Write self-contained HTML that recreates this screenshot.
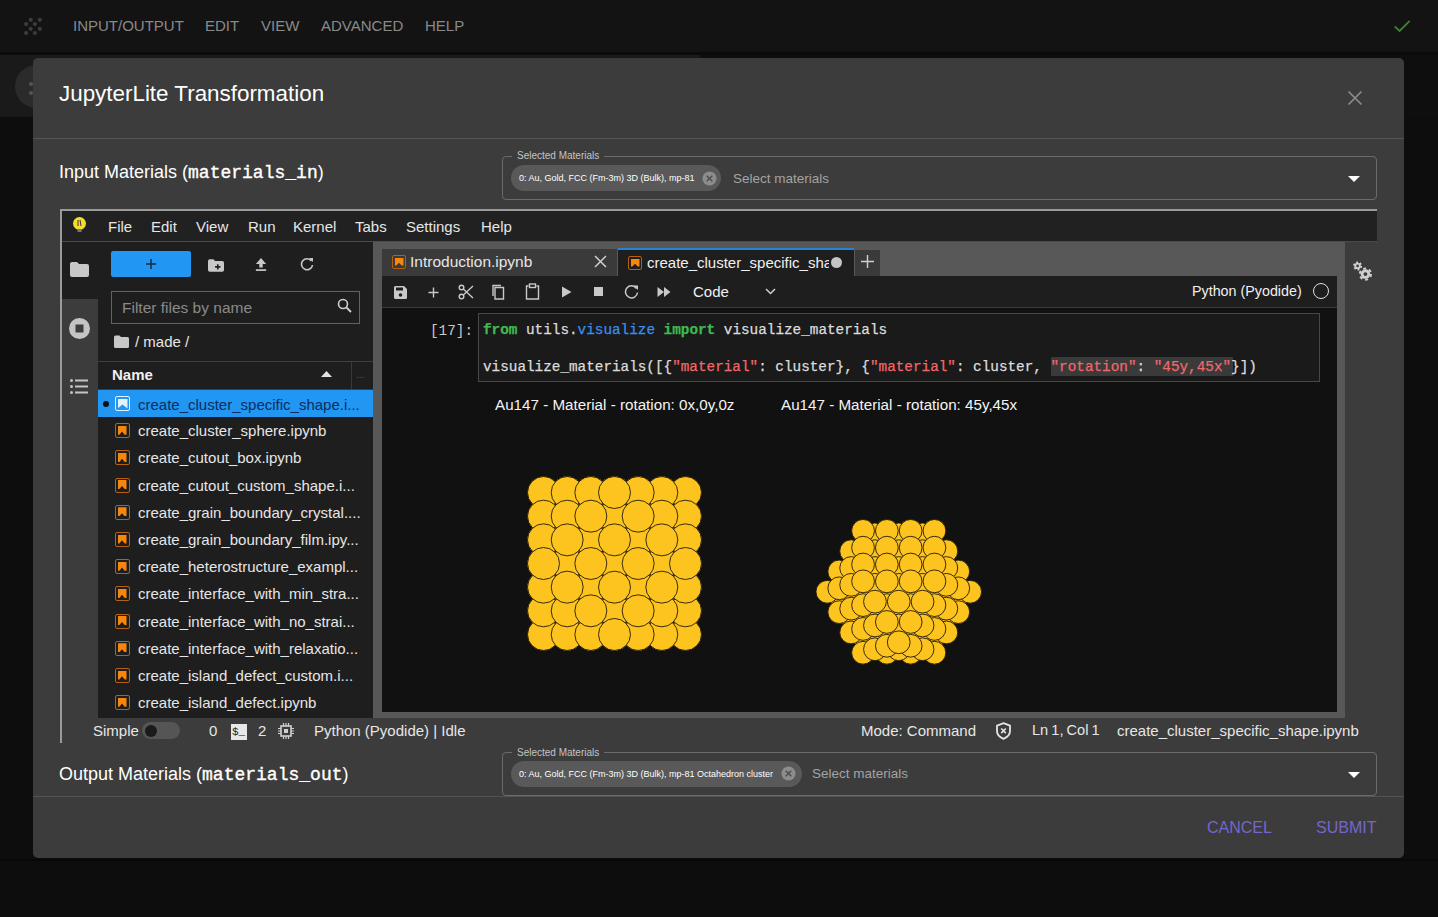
<!DOCTYPE html>
<html><head><meta charset="utf-8">
<style>
*{box-sizing:border-box;margin:0;padding:0}
html,body{width:1438px;height:917px;overflow:hidden;background:#0d0d0d;font-family:"Liberation Sans",sans-serif;color:#e8e8e8}
.a{position:absolute}
.mono{font-family:"Liberation Mono",monospace}
.t{position:absolute;white-space:pre;line-height:1}
.m{position:absolute;top:18px;font-size:15px;color:#8a8a8a;white-space:pre;line-height:1}
.jm{position:absolute;top:219px;font-size:15px;color:#e6e6e6;white-space:pre;line-height:1}
.row{position:absolute;left:98px;width:275px;height:27.2px}
.row .ic{position:absolute;left:17px;top:6px;width:15px;height:15px;border:1.5px solid #b8600f;border-radius:2px}
.row .ic:after{content:"";position:absolute;left:1.5px;top:1.5px;width:9px;height:9px;background:#f7860f;clip-path:polygon(0 0,100% 0,100% 100%,80% 100%,50% 65%,20% 100%,0 100%)}
.row .tx{position:absolute;left:40px;top:6px;font-size:15px;color:#e6e6e6;white-space:pre;line-height:1}
.code{position:absolute;left:483px;font-family:"Liberation Mono",monospace;font-size:14.33px;color:#dcdcdc;white-space:pre;line-height:1;-webkit-text-stroke:0.25px currentColor}
.kw{color:#3fb950;font-weight:700}.mod{color:#3b8eea}.str{color:#f0686a}
.sb{position:absolute;top:723px;font-size:15px;color:#e6e6e6;white-space:pre;line-height:1}
</style></head><body>
<!-- app top bar -->
<div class="a" style="left:0;top:0;width:1438px;height:52px;background:#131313"></div>
<div class="a" style="left:0;top:52px;width:1438px;height:3px;background:#0b0b0b"></div>
<div class="a" style="left:0;top:55px;width:1438px;height:62px;background:#0e0e0e"></div><div class="a" style="left:0;top:55px;width:700px;height:62px;background:#1a1a1a"></div>
<div class="a" style="left:0;top:117px;width:1438px;height:800px;background:#0d0d0d"></div>
<div class="a" style="left:15px;top:64.5px;width:43px;height:43px;border-radius:50%;background:#2b2b2b"></div>
<div class="a" style="left:29px;top:81.5px;width:4px;height:4px;border-radius:50%;background:#555"></div>
<div class="a" style="left:29px;top:90.5px;width:4px;height:4px;border-radius:50%;background:#555"></div>
<svg class="a" style="left:0;top:0" width="50" height="50" viewBox="0 0 50 50" fill="#3c3c3c">
 <circle cx="30.7" cy="19.8" r="2.1"/><circle cx="39.8" cy="19.8" r="2.1"/><circle cx="26.1" cy="24.1" r="2.1"/><circle cx="34.9" cy="24.1" r="2.1"/>
 <circle cx="30.7" cy="28.8" r="2.1"/><circle cx="39.8" cy="28.8" r="2.1"/><circle cx="26.1" cy="33" r="2.1"/><circle cx="34.9" cy="33" r="2.1"/>
</svg>
<div class="m" style="left:73px">INPUT/OUTPUT</div>
<div class="m" style="left:205px">EDIT</div>
<div class="m" style="left:261px">VIEW</div>
<div class="m" style="left:321px">ADVANCED</div>
<div class="m" style="left:425px">HELP</div>
<svg class="a" style="left:1393px;top:17px" width="18" height="16" viewBox="0 0 18 16"><path d="M1.7 9.3 L6.6 13.9 L16.7 3.8" fill="none" stroke="#3e8530" stroke-width="1.8"/></svg>

<div class="a" style="left:0;top:859px;width:1438px;height:2px;background:#080808"></div>
<!-- dialog -->
<div class="a" style="left:33px;top:58px;width:1371px;height:800px;background:#3c3c3c;border-radius:5px"></div>
<div class="t" style="left:59px;top:83px;font-size:22.4px;color:#fff">JupyterLite Transformation</div>
<svg class="a" style="left:1347px;top:90px" width="16" height="16" viewBox="0 0 16 16"><path d="M1.5 1.5L14.5 14.5M14.5 1.5L1.5 14.5" stroke="#8e8e8e" stroke-width="1.6"/></svg>
<div class="a" style="left:33px;top:138px;width:1371px;height:1px;background:#545454"></div>

<div class="t" style="left:59px;top:163px;font-size:18px;color:#fff">Input Materials (<span class="mono" style="font-weight:400;-webkit-text-stroke:0.35px #fff">materials_in</span>)</div>
<!-- input autocomplete -->
<div class="a" style="left:502px;top:156px;width:875px;height:44px;border:1px solid #6b6b6b;border-radius:4px"></div>
<div class="a" style="left:512px;top:150px;width:92px;height:10px;background:#3c3c3c"></div>
<div class="t" style="left:517px;top:151px;font-size:10px;color:#c4c4c4">Selected Materials</div>
<div class="a" style="left:511px;top:165px;width:210px;height:26px;border-radius:13px;background:#595959"></div>
<div class="t" style="left:519px;top:174px;font-size:9px;color:#fff">0: Au, Gold, FCC (Fm-3m) 3D (Bulk), mp-81</div>
<svg class="a" style="left:702px;top:171px" width="15" height="15" viewBox="0 0 16 16"><circle cx="8" cy="8" r="7.5" fill="#8c8c8c"/><path d="M5 5L11 11M11 5L5 11" stroke="#4a4a4a" stroke-width="1.4"/></svg>
<div class="t" style="left:733px;top:172px;font-size:13.5px;color:#a3a3a3">Select materials</div>
<svg class="a" style="left:1348px;top:176px" width="12" height="7" viewBox="0 0 12 7"><path d="M0 0H12L6 6Z" fill="#fff"/></svg>

<!-- iframe -->
<div class="a" style="left:60px;top:209px;width:1317px;height:534px;border-left:2px solid #9a9a9a;border-top:2px solid #9a9a9a"></div>
<div class="a" style="left:62px;top:211px;width:1315px;height:30px;background:#212121"></div>
<div class="a" style="left:62px;top:241px;width:1315px;height:1px;background:#4a4a4a"></div>
<svg class="a" style="left:72px;top:216px" width="15" height="18" viewBox="0 0 15 18"><circle cx="7.5" cy="7.5" r="6.5" fill="#f2dc2e"/><rect x="5.5" y="13" width="4" height="3" fill="#777"/><path d="M6 4v6M8 4l1 6" stroke="#333" stroke-width="1"/></svg>
<div class="jm" style="left:108px">File</div>
<div class="jm" style="left:151px">Edit</div>
<div class="jm" style="left:196px">View</div>
<div class="jm" style="left:248px">Run</div>
<div class="jm" style="left:293px">Kernel</div>
<div class="jm" style="left:355px">Tabs</div>
<div class="jm" style="left:406px">Settings</div>
<div class="jm" style="left:481px">Help</div>

<!-- left sidebar -->
<div class="a" style="left:62px;top:242px;width:36px;height:57px;background:#1e1e1e"></div>
<svg class="a" style="left:70px;top:262px" width="19" height="15" viewBox="0 0 19 15"><path d="M0 2a2 2 0 0 1 2-2h5l2 2h8a2 2 0 0 1 2 2v9a2 2 0 0 1-2 2H2a2 2 0 0 1-2-2Z" fill="#c8c8c8"/></svg>
<svg class="a" style="left:69px;top:318px" width="21" height="21" viewBox="0 0 21 21"><circle cx="10.5" cy="10.5" r="10.5" fill="#c4c4c4"/><rect x="6.5" y="6.5" width="8" height="8" fill="#3c3c3c"/></svg>
<svg class="a" style="left:70px;top:379px" width="18" height="15" viewBox="0 0 18 15" fill="#c4c4c4"><circle cx="1.5" cy="1.5" r="1.5"/><circle cx="1.5" cy="7.5" r="1.5"/><circle cx="1.5" cy="13.5" r="1.5"/><rect x="5" y="0.5" width="13" height="2"/><rect x="5" y="6.5" width="13" height="2"/><rect x="5" y="12.5" width="13" height="2"/></svg>

<!-- file browser panel -->
<div class="a" style="left:98px;top:242px;width:275px;height:476px;background:#1e1e1e"></div>
<div class="a" style="left:111px;top:251px;width:80px;height:26px;background:#2196f3;border-radius:2px"></div>
<svg class="a" style="left:144px;top:257px" width="14" height="14" viewBox="0 0 14 14"><path d="M7 2V12M2 7H12" stroke="#1a2a3a" stroke-width="1.4"/></svg>
<svg class="a" style="left:207.5px;top:258.5px" width="16" height="13" viewBox="0 0 18 14"><path d="M0 2a2 2 0 0 1 2-2h4l2 2h8a2 2 0 0 1 2 2v8a2 2 0 0 1-2 2H2a2 2 0 0 1-2-2Z" fill="#c8c8c8"/><path d="M11 5.5v6M8 8.5h6" stroke="#1e1e1e" stroke-width="1.8"/></svg>
<svg class="a" style="left:255px;top:258px" width="12" height="13" viewBox="0 0 14 15"><path d="M7 0L13 7H9V11H5V7H1Z" fill="#c8c8c8"/><rect x="1" y="13" width="12" height="2" fill="#c8c8c8"/></svg>
<svg class="a" style="left:300px;top:257px" width="14" height="14" viewBox="0 0 14 14"><path d="M11.5 4A5.5 5.5 0 1 0 12.5 8" fill="none" stroke="#c8c8c8" stroke-width="1.6"/><path d="M9 1H13V5Z" fill="#c8c8c8"/></svg>
<div class="a" style="left:111px;top:291px;width:249px;height:33px;border:1px solid #616161;background:#1e1e1e"></div>
<div class="t" style="left:122px;top:300px;font-size:15.5px;color:#8a8a8a">Filter files by name</div>
<svg class="a" style="left:337px;top:298px" width="15" height="15" viewBox="0 0 15 15"><circle cx="6" cy="6" r="4.5" fill="none" stroke="#d0d0d0" stroke-width="1.6"/><path d="M9.5 9.5L14 14" stroke="#d0d0d0" stroke-width="1.8"/></svg>
<svg class="a" style="left:114px;top:335px" width="15" height="13" viewBox="0 0 15 13"><path d="M0 2a1.5 1.5 0 0 1 1.5-1.5h4l1.5 1.5h6.5a1.5 1.5 0 0 1 1.5 1.5v8a1.5 1.5 0 0 1-1.5 1.5H1.5A1.5 1.5 0 0 1 0 11.5Z" fill="#c8c8c8"/></svg>
<div class="t" style="left:135px;top:334px;font-size:15px;color:#e6e6e6">/ made /</div>
<div class="a" style="left:98px;top:361px;width:275px;height:1px;background:#3e3e3e"></div>
<div class="t" style="left:112px;top:367px;font-size:15px;color:#f0f0f0;font-weight:700">Name</div>
<svg class="a" style="left:321px;top:371px" width="11" height="6" viewBox="0 0 11 6"><path d="M0 6L5.5 0L11 6Z" fill="#e0e0e0"/></svg>
<div class="a" style="left:351px;top:362px;width:1px;height:27px;background:#3a3a3a"></div>
<div class="t" style="left:356px;top:370px;font-size:10px;color:#555">...</div>
<div class="a" style="left:98px;top:389px;width:275px;height:1px;background:#3e3e3e"></div>
<div class="a" style="left:98px;top:390px;width:275px;height:27.2px;background:#2196f3"></div>
<div class="a" style="left:103px;top:401px;width:6px;height:6px;border-radius:50%;background:#111"></div>
<div class="a" style="left:115px;top:396px;width:15px;height:15px;border:1.5px solid #e3f2fd;border-radius:2px"></div>
<div class="a" style="left:117.5px;top:398.5px;width:10px;height:10px;background:#e3f2fd;clip-path:polygon(0 0,100% 0,100% 100%,50% 60%,0 100%)"></div>
<div class="t" style="left:138px;top:397px;font-size:15px;color:#0b2e5e">create_cluster_specific_shape.i...</div>
<div class="row" style="top:417.2px"><div class="ic"></div><div class="tx">create_cluster_sphere.ipynb</div></div>
<div class="row" style="top:444.4px"><div class="ic"></div><div class="tx">create_cutout_box.ipynb</div></div>
<div class="row" style="top:471.6px"><div class="ic"></div><div class="tx">create_cutout_custom_shape.i...</div></div>
<div class="row" style="top:498.8px"><div class="ic"></div><div class="tx">create_grain_boundary_crystal....</div></div>
<div class="row" style="top:526.0px"><div class="ic"></div><div class="tx">create_grain_boundary_film.ipy...</div></div>
<div class="row" style="top:553.2px"><div class="ic"></div><div class="tx">create_heterostructure_exampl...</div></div>
<div class="row" style="top:580.4px"><div class="ic"></div><div class="tx">create_interface_with_min_stra...</div></div>
<div class="row" style="top:607.6px"><div class="ic"></div><div class="tx">create_interface_with_no_strai...</div></div>
<div class="row" style="top:634.8px"><div class="ic"></div><div class="tx">create_interface_with_relaxatio...</div></div>
<div class="row" style="top:662.0px"><div class="ic"></div><div class="tx">create_island_defect_custom.i...</div></div>
<div class="row" style="top:689.2px"><div class="ic"></div><div class="tx">create_island_defect.ipynb</div></div>

<!-- dock area -->
<div class="a" style="left:373px;top:242px;width:972px;height:476px;background:#585858"></div>
<div class="a" style="left:1345px;top:242px;width:32px;height:476px;background:#3c3c3c"></div>
<svg class="a" style="left:1345px;top:255px" width="35" height="35" viewBox="0 0 35 35">
 <circle cx="12.6" cy="10.9" r="3.2" fill="#cfcfcf"/><circle cx="12.6" cy="10.9" r="3.6" fill="none" stroke="#cfcfcf" stroke-width="1.8" stroke-dasharray="1.885 1.885"/><circle cx="12.6" cy="10.9" r="1.3" fill="#3c3c3c"/>
 <circle cx="20.4" cy="19.1" r="4.8" fill="#cfcfcf"/><circle cx="20.4" cy="19.1" r="5.6" fill="none" stroke="#cfcfcf" stroke-width="2" stroke-dasharray="2.932 2.932"/><circle cx="20.4" cy="19.1" r="1.9" fill="#3c3c3c"/>
</svg>
<!-- tabs -->
<div class="a" style="left:382px;top:249px;width:235px;height:27px;background:#3a3a3a"></div>
<div class="a" style="left:392px;top:255px;width:14px;height:14px;border:1.5px solid #b8600f;border-radius:2px"></div>
<div class="a" style="left:394.5px;top:257.5px;width:9px;height:8px;background:#f7860f;clip-path:polygon(0 0,100% 0,100% 100%,80% 100%,50% 65%,20% 100%,0 100%)"></div>
<div class="t" style="left:410px;top:254px;font-size:15.5px;color:#e6e6e6">Introduction.ipynb</div>
<svg class="a" style="left:594px;top:255px" width="13" height="13" viewBox="0 0 13 13"><path d="M1 1L12 12M12 1L1 12" stroke="#cfcfcf" stroke-width="1.5"/></svg>
<div class="a" style="left:618px;top:248px;width:236px;height:28px;background:#1e1e1e;border-top:2px solid #2a82d8"></div>
<div class="a" style="left:628px;top:256px;width:14px;height:14px;border:1.5px solid #b8600f;border-radius:2px"></div>
<div class="a" style="left:630.5px;top:258.5px;width:9px;height:8px;background:#f7860f;clip-path:polygon(0 0,100% 0,100% 100%,80% 100%,50% 65%,20% 100%,0 100%)"></div>
<div class="a" style="left:647px;top:254px;width:182px;height:18px;overflow:hidden"><div class="t" style="left:0;top:1px;font-size:15px;color:#f0f0f0">create_cluster_specific_shape.ipynb</div></div>
<div class="a" style="left:831px;top:257px;width:11px;height:11px;border-radius:50%;background:#c4c4c4"></div>
<div class="a" style="left:855px;top:250px;width:25px;height:26px;background:#3a3a3a"></div>
<svg class="a" style="left:861px;top:255px" width="13" height="13" viewBox="0 0 13 13"><path d="M6.5 0V13M0 6.5H13" stroke="#cfcfcf" stroke-width="1.4"/></svg>
<!-- toolbar -->
<div class="a" style="left:382px;top:276px;width:955px;height:31px;background:#1e1e1e"></div>
<div class="a" style="left:382px;top:307px;width:955px;height:1px;background:#3a3a3a"></div>
<svg class="a" style="left:393px;top:285px" width="15" height="15" viewBox="0 0 15 15"><path d="M1 2.5A1.5 1.5 0 0 1 2.5 1H11L14 4V12.5A1.5 1.5 0 0 1 12.5 14H2.5A1.5 1.5 0 0 1 1 12.5Z" fill="#c8c8c8"/><rect x="3" y="2.5" width="7" height="3" fill="#1e1e1e"/><circle cx="7.5" cy="10" r="1.8" fill="#1e1e1e"/></svg>
<svg class="a" style="left:428px;top:287px" width="11" height="11" viewBox="0 0 11 11"><path d="M5.5 0.5V10.5M0.5 5.5H10.5" stroke="#c8c8c8" stroke-width="1.4"/></svg>
<svg class="a" style="left:458px;top:284px" width="16" height="16" viewBox="0 0 16 16"><circle cx="3.5" cy="3.5" r="2.3" fill="none" stroke="#c8c8c8" stroke-width="1.4"/><circle cx="3.5" cy="12.5" r="2.3" fill="none" stroke="#c8c8c8" stroke-width="1.4"/><path d="M5.3 5L15 14M5.3 11L15 2" stroke="#c8c8c8" stroke-width="1.4"/></svg>
<svg class="a" style="left:491px;top:284px" width="16" height="16" viewBox="0 0 16 16"><path d="M4 3.5H12.5V15H4Z" fill="none" stroke="#c8c8c8" stroke-width="1.4"/><path d="M2 12V1.5H10" fill="none" stroke="#c8c8c8" stroke-width="1.4"/></svg>
<svg class="a" style="left:525px;top:283px" width="15" height="17" viewBox="0 0 15 17"><path d="M3.5 3H1.5V16H13.5V3H11.5" fill="none" stroke="#c8c8c8" stroke-width="1.4"/><rect x="4.5" y="1" width="6" height="3.5" fill="none" stroke="#c8c8c8" stroke-width="1.4"/></svg>
<svg class="a" style="left:561px;top:286px" width="11" height="12" viewBox="0 0 11 12"><path d="M1 0.5L10.5 6L1 11.5Z" fill="#c8c8c8"/></svg>
<div class="a" style="left:594px;top:287px;width:9px;height:9px;background:#c8c8c8"></div>
<svg class="a" style="left:624px;top:284px" width="15" height="15" viewBox="0 0 15 15"><path d="M12.5 4.5A6 6 0 1 0 13.5 8.5" fill="none" stroke="#c8c8c8" stroke-width="1.5"/><path d="M9.5 1.5H14V6Z" fill="#c8c8c8"/></svg>
<svg class="a" style="left:657px;top:286px" width="14" height="12" viewBox="0 0 14 12"><path d="M0.5 1L7 6L0.5 11ZM7 1L13.5 6L7 11Z" fill="#c8c8c8"/></svg>

<div class="t" style="left:693px;top:284px;font-size:15px;color:#f0f0f0">Code</div>
<svg class="a" style="left:765px;top:288px" width="11" height="7" viewBox="0 0 11 7"><path d="M1 1L5.5 5.5L10 1" fill="none" stroke="#cfcfcf" stroke-width="1.5"/></svg>
<div class="t" style="left:1192px;top:284px;font-size:14.3px;color:#f0f0f0">Python (Pyodide)</div>
<div class="a" style="left:1313px;top:283px;width:16px;height:16px;border-radius:50%;border:1.5px solid #e0e0e0"></div>
<!-- notebook content -->
<div class="a" style="left:382px;top:308px;width:955px;height:404px;background:#111111"></div>
<div class="t mono" style="left:430px;top:324px;font-size:14.33px;color:#c8c8c8">[17]:</div>
<div class="a" style="left:478px;top:313px;width:842px;height:69px;background:#1a1a1a;border:1px solid #474747"></div>
<div class="code" style="top:323px"><span class="kw">from</span> utils.<span class="mod">visualize</span> <span class="kw">import</span> visualize_materials</div>
<div class="a" style="left:1051px;top:357px;width:182px;height:19px;background:#3a3a3a"></div>
<div class="code" style="top:360px">visualize_materials([{<span class="str">"material"</span>: cluster}, {<span class="str">"material"</span>: cluster, <span class="str">"rotation"</span>: <span class="str">"45y,45x"</span>}])</div>
<div class="t" style="left:495px;top:397px;font-size:15.2px;color:#f4f4f4">Au147 - Material - rotation: 0x,0y,0z</div>
<div class="t" style="left:781px;top:397px;font-size:15.2px;color:#f4f4f4">Au147 - Material - rotation: 45y,45x</div>
<div id="clusters"><svg class="a" style="left:0;top:0" width="1438" height="917" viewBox="0 0 1438 917"><g fill="#fdc41f" stroke="#1f1a08" stroke-width="0.9"><circle cx="543.52" cy="563.50" r="15.99"/><circle cx="567.18" cy="539.84" r="15.99"/><circle cx="567.18" cy="587.16" r="15.99"/><circle cx="590.84" cy="516.18" r="15.99"/><circle cx="590.84" cy="563.50" r="15.99"/><circle cx="590.84" cy="610.82" r="15.99"/><circle cx="614.50" cy="492.52" r="15.99"/><circle cx="614.50" cy="539.84" r="15.99"/><circle cx="614.50" cy="587.16" r="15.99"/><circle cx="614.50" cy="634.48" r="15.99"/><circle cx="638.16" cy="516.18" r="15.99"/><circle cx="638.16" cy="563.50" r="15.99"/><circle cx="638.16" cy="610.82" r="15.99"/><circle cx="661.82" cy="539.84" r="15.99"/><circle cx="661.82" cy="587.16" r="15.99"/><circle cx="685.48" cy="563.50" r="15.99"/><circle cx="543.52" cy="539.84" r="15.99"/><circle cx="543.52" cy="587.16" r="15.99"/><circle cx="567.18" cy="516.18" r="15.99"/><circle cx="567.18" cy="563.50" r="15.99"/><circle cx="567.18" cy="610.82" r="15.99"/><circle cx="590.84" cy="492.52" r="15.99"/><circle cx="590.84" cy="539.84" r="15.99"/><circle cx="590.84" cy="587.16" r="15.99"/><circle cx="590.84" cy="634.48" r="15.99"/><circle cx="614.50" cy="516.18" r="15.99"/><circle cx="614.50" cy="563.50" r="15.99"/><circle cx="614.50" cy="610.82" r="15.99"/><circle cx="638.16" cy="492.52" r="15.99"/><circle cx="638.16" cy="539.84" r="15.99"/><circle cx="638.16" cy="587.16" r="15.99"/><circle cx="638.16" cy="634.48" r="15.99"/><circle cx="661.82" cy="516.18" r="15.99"/><circle cx="661.82" cy="563.50" r="15.99"/><circle cx="661.82" cy="610.82" r="15.99"/><circle cx="685.48" cy="539.84" r="15.99"/><circle cx="685.48" cy="587.16" r="15.99"/><circle cx="543.52" cy="516.18" r="15.99"/><circle cx="543.52" cy="563.50" r="15.99"/><circle cx="543.52" cy="610.82" r="15.99"/><circle cx="567.18" cy="492.52" r="15.99"/><circle cx="567.18" cy="539.84" r="15.99"/><circle cx="567.18" cy="587.16" r="15.99"/><circle cx="567.18" cy="634.48" r="15.99"/><circle cx="590.84" cy="516.18" r="15.99"/><circle cx="590.84" cy="563.50" r="15.99"/><circle cx="590.84" cy="610.82" r="15.99"/><circle cx="614.50" cy="492.52" r="15.99"/><circle cx="614.50" cy="539.84" r="15.99"/><circle cx="614.50" cy="587.16" r="15.99"/><circle cx="614.50" cy="634.48" r="15.99"/><circle cx="638.16" cy="516.18" r="15.99"/><circle cx="638.16" cy="563.50" r="15.99"/><circle cx="638.16" cy="610.82" r="15.99"/><circle cx="661.82" cy="492.52" r="15.99"/><circle cx="661.82" cy="539.84" r="15.99"/><circle cx="661.82" cy="587.16" r="15.99"/><circle cx="661.82" cy="634.48" r="15.99"/><circle cx="685.48" cy="516.18" r="15.99"/><circle cx="685.48" cy="563.50" r="15.99"/><circle cx="685.48" cy="610.82" r="15.99"/><circle cx="543.52" cy="492.52" r="15.99"/><circle cx="543.52" cy="539.84" r="15.99"/><circle cx="543.52" cy="587.16" r="15.99"/><circle cx="543.52" cy="634.48" r="15.99"/><circle cx="567.18" cy="516.18" r="15.99"/><circle cx="567.18" cy="563.50" r="15.99"/><circle cx="567.18" cy="610.82" r="15.99"/><circle cx="590.84" cy="492.52" r="15.99"/><circle cx="590.84" cy="539.84" r="15.99"/><circle cx="590.84" cy="587.16" r="15.99"/><circle cx="590.84" cy="634.48" r="15.99"/><circle cx="614.50" cy="516.18" r="15.99"/><circle cx="614.50" cy="563.50" r="15.99"/><circle cx="614.50" cy="610.82" r="15.99"/><circle cx="638.16" cy="492.52" r="15.99"/><circle cx="638.16" cy="539.84" r="15.99"/><circle cx="638.16" cy="587.16" r="15.99"/><circle cx="638.16" cy="634.48" r="15.99"/><circle cx="661.82" cy="516.18" r="15.99"/><circle cx="661.82" cy="563.50" r="15.99"/><circle cx="661.82" cy="610.82" r="15.99"/><circle cx="685.48" cy="492.52" r="15.99"/><circle cx="685.48" cy="539.84" r="15.99"/><circle cx="685.48" cy="587.16" r="15.99"/><circle cx="685.48" cy="634.48" r="15.99"/><circle cx="543.52" cy="516.18" r="15.99"/><circle cx="543.52" cy="563.50" r="15.99"/><circle cx="543.52" cy="610.82" r="15.99"/><circle cx="567.18" cy="492.52" r="15.99"/><circle cx="567.18" cy="539.84" r="15.99"/><circle cx="567.18" cy="587.16" r="15.99"/><circle cx="567.18" cy="634.48" r="15.99"/><circle cx="590.84" cy="516.18" r="15.99"/><circle cx="590.84" cy="563.50" r="15.99"/><circle cx="590.84" cy="610.82" r="15.99"/><circle cx="614.50" cy="492.52" r="15.99"/><circle cx="614.50" cy="539.84" r="15.99"/><circle cx="614.50" cy="587.16" r="15.99"/><circle cx="614.50" cy="634.48" r="15.99"/><circle cx="638.16" cy="516.18" r="15.99"/><circle cx="638.16" cy="563.50" r="15.99"/><circle cx="638.16" cy="610.82" r="15.99"/><circle cx="661.82" cy="492.52" r="15.99"/><circle cx="661.82" cy="539.84" r="15.99"/><circle cx="661.82" cy="587.16" r="15.99"/><circle cx="661.82" cy="634.48" r="15.99"/><circle cx="685.48" cy="516.18" r="15.99"/><circle cx="685.48" cy="563.50" r="15.99"/><circle cx="685.48" cy="610.82" r="15.99"/><circle cx="543.52" cy="539.84" r="15.99"/><circle cx="543.52" cy="587.16" r="15.99"/><circle cx="567.18" cy="516.18" r="15.99"/><circle cx="567.18" cy="563.50" r="15.99"/><circle cx="567.18" cy="610.82" r="15.99"/><circle cx="590.84" cy="492.52" r="15.99"/><circle cx="590.84" cy="539.84" r="15.99"/><circle cx="590.84" cy="587.16" r="15.99"/><circle cx="590.84" cy="634.48" r="15.99"/><circle cx="614.50" cy="516.18" r="15.99"/><circle cx="614.50" cy="563.50" r="15.99"/><circle cx="614.50" cy="610.82" r="15.99"/><circle cx="638.16" cy="492.52" r="15.99"/><circle cx="638.16" cy="539.84" r="15.99"/><circle cx="638.16" cy="587.16" r="15.99"/><circle cx="638.16" cy="634.48" r="15.99"/><circle cx="661.82" cy="516.18" r="15.99"/><circle cx="661.82" cy="563.50" r="15.99"/><circle cx="661.82" cy="610.82" r="15.99"/><circle cx="685.48" cy="539.84" r="15.99"/><circle cx="685.48" cy="587.16" r="15.99"/><circle cx="543.52" cy="563.50" r="15.99"/><circle cx="567.18" cy="539.84" r="15.99"/><circle cx="567.18" cy="587.16" r="15.99"/><circle cx="590.84" cy="516.18" r="15.99"/><circle cx="590.84" cy="563.50" r="15.99"/><circle cx="590.84" cy="610.82" r="15.99"/><circle cx="614.50" cy="492.52" r="15.99"/><circle cx="614.50" cy="539.84" r="15.99"/><circle cx="614.50" cy="587.16" r="15.99"/><circle cx="614.50" cy="634.48" r="15.99"/><circle cx="638.16" cy="516.18" r="15.99"/><circle cx="638.16" cy="563.50" r="15.99"/><circle cx="638.16" cy="610.82" r="15.99"/><circle cx="661.82" cy="539.84" r="15.99"/><circle cx="661.82" cy="587.16" r="15.99"/><circle cx="685.48" cy="563.50" r="15.99"/><circle cx="863.05" cy="602.26" r="11.38"/><circle cx="886.85" cy="602.26" r="11.38"/><circle cx="910.65" cy="602.26" r="11.38"/><circle cx="934.45" cy="602.26" r="11.38"/><circle cx="874.95" cy="581.94" r="11.38"/><circle cx="898.75" cy="581.94" r="11.38"/><circle cx="922.55" cy="581.94" r="11.38"/><circle cx="886.85" cy="561.63" r="11.38"/><circle cx="910.65" cy="561.63" r="11.38"/><circle cx="898.75" cy="541.31" r="11.38"/><circle cx="863.05" cy="619.09" r="11.38"/><circle cx="886.85" cy="619.09" r="11.38"/><circle cx="910.65" cy="619.09" r="11.38"/><circle cx="934.45" cy="619.09" r="11.38"/><circle cx="851.15" cy="598.77" r="11.38"/><circle cx="874.95" cy="598.77" r="11.38"/><circle cx="898.75" cy="598.77" r="11.38"/><circle cx="922.55" cy="598.77" r="11.38"/><circle cx="946.35" cy="598.77" r="11.38"/><circle cx="863.05" cy="578.46" r="11.38"/><circle cx="886.85" cy="578.46" r="11.38"/><circle cx="910.65" cy="578.46" r="11.38"/><circle cx="934.45" cy="578.46" r="11.38"/><circle cx="874.95" cy="558.14" r="11.38"/><circle cx="898.75" cy="558.14" r="11.38"/><circle cx="922.55" cy="558.14" r="11.38"/><circle cx="886.85" cy="537.82" r="11.38"/><circle cx="910.65" cy="537.82" r="11.38"/><circle cx="863.05" cy="635.92" r="11.38"/><circle cx="886.85" cy="635.92" r="11.38"/><circle cx="910.65" cy="635.92" r="11.38"/><circle cx="934.45" cy="635.92" r="11.38"/><circle cx="851.15" cy="615.60" r="11.38"/><circle cx="874.95" cy="615.60" r="11.38"/><circle cx="898.75" cy="615.60" r="11.38"/><circle cx="922.55" cy="615.60" r="11.38"/><circle cx="946.35" cy="615.60" r="11.38"/><circle cx="839.25" cy="595.29" r="11.38"/><circle cx="863.05" cy="595.29" r="11.38"/><circle cx="886.85" cy="595.29" r="11.38"/><circle cx="910.65" cy="595.29" r="11.38"/><circle cx="934.45" cy="595.29" r="11.38"/><circle cx="958.25" cy="595.29" r="11.38"/><circle cx="851.15" cy="574.97" r="11.38"/><circle cx="874.95" cy="574.97" r="11.38"/><circle cx="898.75" cy="574.97" r="11.38"/><circle cx="922.55" cy="574.97" r="11.38"/><circle cx="946.35" cy="574.97" r="11.38"/><circle cx="863.05" cy="554.65" r="11.38"/><circle cx="886.85" cy="554.65" r="11.38"/><circle cx="910.65" cy="554.65" r="11.38"/><circle cx="934.45" cy="554.65" r="11.38"/><circle cx="863.05" cy="652.75" r="11.38"/><circle cx="886.85" cy="652.75" r="11.38"/><circle cx="910.65" cy="652.75" r="11.38"/><circle cx="934.45" cy="652.75" r="11.38"/><circle cx="874.95" cy="534.34" r="11.38"/><circle cx="898.75" cy="534.34" r="11.38"/><circle cx="922.55" cy="534.34" r="11.38"/><circle cx="851.15" cy="632.43" r="11.38"/><circle cx="874.95" cy="632.43" r="11.38"/><circle cx="898.75" cy="632.43" r="11.38"/><circle cx="922.55" cy="632.43" r="11.38"/><circle cx="946.35" cy="632.43" r="11.38"/><circle cx="839.25" cy="612.12" r="11.38"/><circle cx="863.05" cy="612.12" r="11.38"/><circle cx="886.85" cy="612.12" r="11.38"/><circle cx="910.65" cy="612.12" r="11.38"/><circle cx="934.45" cy="612.12" r="11.38"/><circle cx="958.25" cy="612.12" r="11.38"/><circle cx="827.35" cy="591.80" r="11.38"/><circle cx="851.15" cy="591.80" r="11.38"/><circle cx="874.95" cy="591.80" r="11.38"/><circle cx="898.75" cy="591.80" r="11.38"/><circle cx="922.55" cy="591.80" r="11.38"/><circle cx="946.35" cy="591.80" r="11.38"/><circle cx="970.15" cy="591.80" r="11.38"/><circle cx="839.25" cy="571.48" r="11.38"/><circle cx="863.05" cy="571.48" r="11.38"/><circle cx="886.85" cy="571.48" r="11.38"/><circle cx="910.65" cy="571.48" r="11.38"/><circle cx="934.45" cy="571.48" r="11.38"/><circle cx="958.25" cy="571.48" r="11.38"/><circle cx="851.15" cy="551.17" r="11.38"/><circle cx="874.95" cy="551.17" r="11.38"/><circle cx="898.75" cy="551.17" r="11.38"/><circle cx="922.55" cy="551.17" r="11.38"/><circle cx="946.35" cy="551.17" r="11.38"/><circle cx="874.95" cy="649.26" r="11.38"/><circle cx="898.75" cy="649.26" r="11.38"/><circle cx="922.55" cy="649.26" r="11.38"/><circle cx="863.05" cy="530.85" r="11.38"/><circle cx="886.85" cy="530.85" r="11.38"/><circle cx="910.65" cy="530.85" r="11.38"/><circle cx="934.45" cy="530.85" r="11.38"/><circle cx="863.05" cy="628.95" r="11.38"/><circle cx="886.85" cy="628.95" r="11.38"/><circle cx="910.65" cy="628.95" r="11.38"/><circle cx="934.45" cy="628.95" r="11.38"/><circle cx="851.15" cy="608.63" r="11.38"/><circle cx="874.95" cy="608.63" r="11.38"/><circle cx="898.75" cy="608.63" r="11.38"/><circle cx="922.55" cy="608.63" r="11.38"/><circle cx="946.35" cy="608.63" r="11.38"/><circle cx="839.25" cy="588.31" r="11.38"/><circle cx="863.05" cy="588.31" r="11.38"/><circle cx="886.85" cy="588.31" r="11.38"/><circle cx="910.65" cy="588.31" r="11.38"/><circle cx="934.45" cy="588.31" r="11.38"/><circle cx="958.25" cy="588.31" r="11.38"/><circle cx="851.15" cy="568.00" r="11.38"/><circle cx="874.95" cy="568.00" r="11.38"/><circle cx="898.75" cy="568.00" r="11.38"/><circle cx="922.55" cy="568.00" r="11.38"/><circle cx="946.35" cy="568.00" r="11.38"/><circle cx="863.05" cy="547.68" r="11.38"/><circle cx="886.85" cy="547.68" r="11.38"/><circle cx="910.65" cy="547.68" r="11.38"/><circle cx="934.45" cy="547.68" r="11.38"/><circle cx="886.85" cy="645.78" r="11.38"/><circle cx="910.65" cy="645.78" r="11.38"/><circle cx="874.95" cy="625.46" r="11.38"/><circle cx="898.75" cy="625.46" r="11.38"/><circle cx="922.55" cy="625.46" r="11.38"/><circle cx="863.05" cy="605.14" r="11.38"/><circle cx="886.85" cy="605.14" r="11.38"/><circle cx="910.65" cy="605.14" r="11.38"/><circle cx="934.45" cy="605.14" r="11.38"/><circle cx="851.15" cy="584.83" r="11.38"/><circle cx="874.95" cy="584.83" r="11.38"/><circle cx="898.75" cy="584.83" r="11.38"/><circle cx="922.55" cy="584.83" r="11.38"/><circle cx="946.35" cy="584.83" r="11.38"/><circle cx="863.05" cy="564.51" r="11.38"/><circle cx="886.85" cy="564.51" r="11.38"/><circle cx="910.65" cy="564.51" r="11.38"/><circle cx="934.45" cy="564.51" r="11.38"/><circle cx="898.75" cy="642.29" r="11.38"/><circle cx="886.85" cy="621.97" r="11.38"/><circle cx="910.65" cy="621.97" r="11.38"/><circle cx="874.95" cy="601.66" r="11.38"/><circle cx="898.75" cy="601.66" r="11.38"/><circle cx="922.55" cy="601.66" r="11.38"/><circle cx="863.05" cy="581.34" r="11.38"/><circle cx="886.85" cy="581.34" r="11.38"/><circle cx="910.65" cy="581.34" r="11.38"/><circle cx="934.45" cy="581.34" r="11.38"/></g></svg></div>

<!-- status bar -->
<div class="sb" style="left:93px">Simple</div>
<div class="a" style="left:142px;top:722px;width:38px;height:17px;border-radius:9px;background:#555"></div>
<div class="a" style="left:145px;top:725px;width:12px;height:12px;border-radius:50%;background:#1a1a1a"></div>
<div class="sb" style="left:209px">0</div>
<div class="a" style="left:231px;top:724px;width:16px;height:16px;background:#e8e8e8"></div>
<div class="t mono" style="left:232px;top:727px;font-size:11px;color:#222">$_</div>
<div class="sb" style="left:258px">2</div>
<svg class="a" style="left:278px;top:723px" width="16" height="16" viewBox="0 0 16 16"><rect x="3" y="3" width="10" height="10" fill="none" stroke="#d0d0d0" stroke-width="1.6"/><rect x="6" y="6" width="4" height="4" fill="#d0d0d0"/><path d="M5.5 0v3M8 0v3M10.5 0v3M5.5 13v3M8 13v3M10.5 13v3M0 5.5h3M0 8h3M0 10.5h3M13 5.5h3M13 8h3M13 10.5h3" stroke="#d0d0d0" stroke-width="1.2"/></svg>
<div class="sb" style="left:314px">Python (Pyodide) | Idle</div>
<div class="sb" style="left:861px">Mode: Command</div>
<svg class="a" style="left:995px;top:722px" width="17" height="18" viewBox="0 0 17 18"><path d="M8.5 1.2L15 3.6V9c0 3.8-2.8 6.2-6.5 7.8C4.8 15.2 2 12.8 2 9V3.6Z" fill="none" stroke="#e6e6e6" stroke-width="1.8"/><path d="M6.2 6.5L10.8 11.1M10.8 6.5L6.2 11.1" stroke="#e6e6e6" stroke-width="1.6"/></svg>
<div class="sb" style="left:1032px;word-spacing:-1px;font-size:14.6px">Ln 1, Col 1</div>
<div class="sb" style="left:1117px">create_cluster_specific_shape.ipynb</div>

<!-- output materials -->
<div class="t" style="left:59px;top:765px;font-size:18px;color:#fff">Output Materials (<span class="mono" style="font-weight:400;-webkit-text-stroke:0.35px #fff">materials_out</span>)</div>
<div class="a" style="left:502px;top:752px;width:875px;height:44px;border:1px solid #6b6b6b;border-radius:4px"></div>
<div class="a" style="left:512px;top:746px;width:92px;height:10px;background:#3c3c3c"></div>
<div class="t" style="left:517px;top:747.5px;font-size:10px;color:#c4c4c4">Selected Materials</div>
<div class="a" style="left:511px;top:761px;width:291px;height:26px;border-radius:13px;background:#595959"></div>
<div class="t" style="left:519px;top:769.5px;font-size:9px;color:#fff">0: Au, Gold, FCC (Fm-3m) 3D (Bulk), mp-81 Octahedron cluster</div>
<svg class="a" style="left:781px;top:766px" width="15" height="15" viewBox="0 0 16 16"><circle cx="8" cy="8" r="7.5" fill="#8c8c8c"/><path d="M5 5L11 11M11 5L5 11" stroke="#4a4a4a" stroke-width="1.4"/></svg>
<div class="t" style="left:812px;top:767px;font-size:13.5px;color:#a3a3a3">Select materials</div>
<svg class="a" style="left:1348px;top:772px" width="12" height="7" viewBox="0 0 12 7"><path d="M0 0H12L6 6Z" fill="#fff"/></svg>
<div class="a" style="left:33px;top:796px;width:1371px;height:1px;background:#545454"></div>
<div class="t" style="left:1207px;top:820px;font-size:16px;color:#7566cc">CANCEL</div>
<div class="t" style="left:1316px;top:820px;font-size:16px;color:#7566cc">SUBMIT</div>
</body></html>
